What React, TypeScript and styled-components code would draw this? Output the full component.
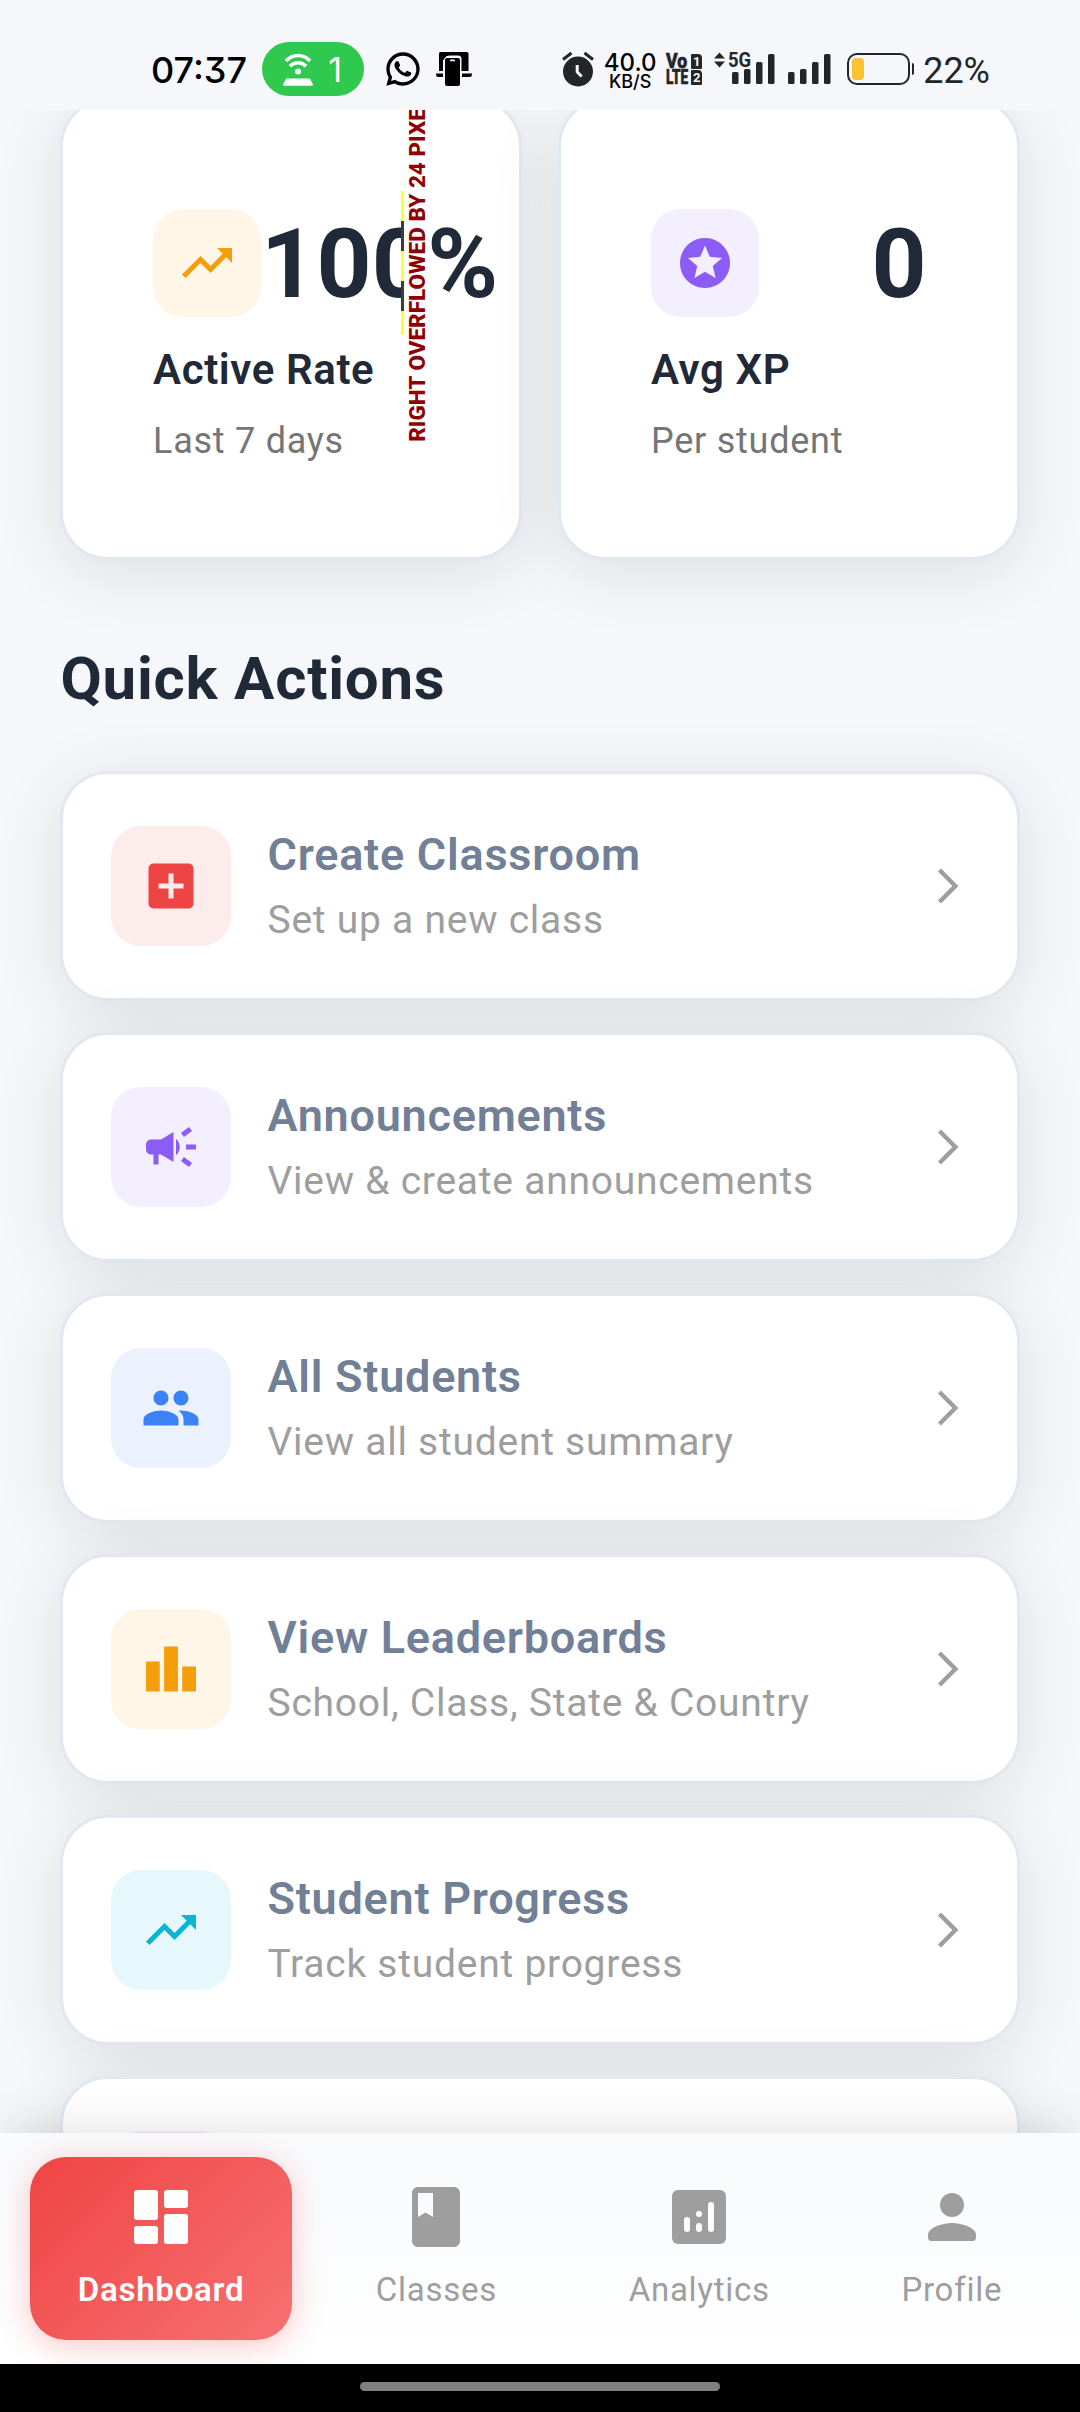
import React from "react";
import styled, { createGlobalStyle } from "styled-components";
import type { IconType } from "react-icons";
import {
  MdAddBox,
  MdArrowForwardIos,
  MdBook,
  MdCampaign,
  MdLeaderboard,
  MdPeople,
  MdStars,
  MdTrendingUp,
} from "react-icons/md";
import { RiWhatsappLine } from "react-icons/ri";

const GlobalStyle = createGlobalStyle`
  *, *::before, *::after { box-sizing: border-box; }
  body { margin: 0; background: #f5f7fb; }
`;

const Screen = styled.div`
  width: 1080px;
  height: 2412px;
  display: flex;
  flex-direction: column;
  overflow: hidden;
  background: #f5f7fb;
  font-family: Roboto, sans-serif;
  letter-spacing: 0.75px;
  color: #1f2937;
`;

/* ---------- Status bar ---------- */

const StatusBar = styled.header`
  flex: none;
  height: 110px;
  padding: 28px 90px 0 151px;
  display: flex;
  justify-content: space-between;
  background: #f5f7fb;
  font-family: Inter, sans-serif;
  letter-spacing: 0;
  color: #000;
`;

const StatusGroup = styled.div`
  display: flex;
  align-items: center;
  height: 82px;
`;

const Clock = styled.time`
  width: 111px;
  padding-top: 2px;
  font-size: 36px;
  font-weight: 450;
  font-feature-settings: "cv09";
  white-space: nowrap;
`;

const HotspotPill = styled.span`
  width: 102px;
  height: 54px;
  border-radius: 27px;
  padding: 0 22px 0 21px;
  display: flex;
  align-items: center;
  justify-content: space-between;
  background: #30c94f;
  color: #fff;
  font-size: 34px;
  font-weight: 400;
`;

const WhatsappSlot = styled.span`
  display: flex;
  margin-left: 19px;
`;

const CastSlot = styled.span`
  display: flex;
  margin-left: 13px;
`;

const NetSpeed = styled.span`
  width: 60px;
  margin-left: 6px;
  padding-top: 5px;
  display: flex;
  flex-direction: column;
  align-items: center;
  font-weight: 500;
`;

const SpeedValue = styled.span`
  font-size: 24px;
  line-height: 20px;
`;

const SpeedUnit = styled.span`
  font-size: 18px;
  line-height: 18px;
`;

const Volte = styled.span`
  margin-left: 6px;
  width: 36px;
  display: grid;
  grid-template-columns: 24px 11px;
  grid-auto-rows: 15px;
  row-gap: 1px;
  column-gap: 1px;
  color: #232626;
`;

const VolteWord = styled.span<{ $stretch: number }>`
  font: 800 20px / 15px Roboto, sans-serif;
  -webkit-text-stroke: 0.7px #232626;
  transform: scaleX(${(p) => p.$stretch});
  transform-origin: left center;
  white-space: nowrap;
`;

const SimTag = styled.span`
  border-radius: 1px 4px 1px 1px;
  display: flex;
  align-items: center;
  justify-content: center;
  background: #232626;
  color: #f5f7fb;
  font: 700 13px / 15px Roboto, sans-serif;
`;

const MobileSignal = styled.span`
  position: relative;
  display: flex;
  margin-left: 12px;
`;

const NetworkType = styled.span`
  position: absolute;
  left: 14px;
  top: -4px;
  font: 700 21px / 21px Roboto, sans-serif;
  transform: scaleX(0.88);
  transform-origin: left center;
  color: #232626;
  -webkit-text-stroke: 3px #f5f7fb;
  paint-order: stroke fill;
`;

const SecondSignal = styled.span`
  display: flex;
  margin-left: 12px;
`;

const Battery = styled.span`
  display: flex;
  align-items: center;
  margin-left: 16px;
`;

const BatteryShell = styled.span`
  width: 63px;
  height: 32px;
  padding: 3px;
  border: 2px solid #232626;
  border-radius: 10px;
  display: flex;
`;

const BatteryLevel = styled.span`
  width: 12px;
  border-radius: 4px;
  background: #fdc22f;
`;

const BatteryTip = styled.span`
  width: 2px;
  height: 12px;
  margin-left: 2px;
  border-radius: 0 2px 2px 0;
  background: #232626;
`;

const BatteryText = styled.span`
  margin-left: 9px;
  padding-top: 4px;
  font: 450 36px / 40px Roboto, sans-serif;
  color: #232626;
`;

/* ---------- Scrolling content ---------- */

const Content = styled.main`
  flex: 1;
  min-height: 0;
  overflow: hidden;
  padding: 0 60px;
`;

const StatGrid = styled.section`
  margin-top: -12px;
  display: grid;
  grid-template-columns: repeat(2, minmax(0, 1fr));
  gap: 36px;
`;

const Card = styled.article`
  background: #fff;
  border: 3px solid #e2e8f0;
  border-radius: 48px;
  box-shadow: 0 12px 70px rgba(0, 0, 0, 0.1);
`;

const StatCard = styled(Card)`
  height: 462px;
  padding: 90px;
`;

const StatTop = styled.div`
  position: relative;
  height: 144px;
  display: flex;
  align-items: center;
  justify-content: space-between;
`;

const IconTile = styled.span<{ $size: number; $bg: string; $fg: string }>`
  flex: none;
  width: ${(p) => p.$size}px;
  height: ${(p) => p.$size}px;
  border-radius: 30px;
  display: flex;
  align-items: center;
  justify-content: center;
  background: ${(p) => p.$bg};
  color: ${(p) => p.$fg};
`;

const StatValue = styled.strong`
  font-size: 96px;
  line-height: 144px;
  font-weight: 700;
  letter-spacing: 0.3px;
  padding-top: 2px;
`;

const StatLabel = styled.h3`
  margin: 3px 0 0;
  font-size: 42px;
  line-height: 63px;
  font-weight: 600;
  letter-spacing: 0.6px;
`;

const StatHint = styled.p`
  margin: 13px 0 0;
  font-size: 36px;
  line-height: 54px;
  color: #757575;
`;

const OverflowStripe = styled.span`
  position: absolute;
  left: 248px;
  top: 0;
  width: 3px;
  height: 144px;
  background: repeating-linear-gradient(
    to bottom,
    #ffff33 0 30px,
    #3c3c3c 30px 60px
  );
`;

const OverflowLabel = styled.span`
  position: absolute;
  left: 251px;
  bottom: -107px;
  width: 25px;
  padding: 0 1.5px 0 0.5px;
  writing-mode: vertical-rl;
  transform: rotate(180deg);
  background: #fff;
  color: #900000;
  font-size: 22.5px;
  line-height: 23px;
  font-weight: 800;
  letter-spacing: 0;
  white-space: nowrap;
`;

const SectionTitle = styled.h2`
  margin: 74px 0 47px;
  padding-left: 0.5px;
  font-size: 60px;
  line-height: 90px;
  font-weight: 700;
`;

const ActionList = styled.section`
  display: flex;
  flex-direction: column;
  gap: 31px;
`;

const ActionCard = styled(Card)`
  height: 230px;
  padding: 0 48px;
  display: flex;
  align-items: center;
  gap: 36px;
`;

const ActionText = styled.div`
  flex: 1;
  padding: 0 0 2px 0.5px;
`;

const ActionTitle = styled.h3`
  margin: 0 0 3px;
  font-size: 45px;
  line-height: 66px;
  font-weight: 600;
  color: #718096;
`;

const ActionSubtitle = styled.p`
  margin: 0;
  font-size: 39px;
  line-height: 58px;
  color: #9e9e9e;
`;

/* ---------- Bottom navigation ---------- */

const NavBar = styled.nav`
  position: relative;
  z-index: 1;
  flex: none;
  height: 231px;
  padding: 24px 12px;
  display: flex;
  justify-content: space-around;
  background: linear-gradient(to bottom, #f8fafc, #fff);
  box-shadow: 0 -6px 42px rgba(0, 0, 0, 0.11);
`;

const NavItem = styled.a<{ $active?: boolean }>`
  height: 183px;
  padding: 24px 48px 26px;
  border-radius: 36px;
  display: flex;
  flex-direction: column;
  align-items: center;
  gap: 13px;
  color: ${(p) => (p.$active ? "#fff" : "#9e9e9e")};
  font-size: 33px;
  line-height: 48px;
  font-weight: ${(p) => (p.$active ? 600 : 400)};
  background: ${(p) => (p.$active ? "linear-gradient(135deg, #ef4444, #f87171)" : "none")};
  box-shadow: ${(p) => (p.$active ? "0 6px 32px rgba(239, 68, 68, 0.3)" : "none")};
`;

const SystemBar = styled.footer`
  position: relative;
  z-index: 1;
  flex: none;
  height: 48px;
  display: flex;
  justify-content: center;
  padding-top: 18px;
  background: #000;
`;

const HomeHandle = styled.span`
  width: 360px;
  height: 9px;
  border-radius: 5px;
  background: #808080;
`;

/* ---------- Icons ---------- */

const HotspotIcon = () => (
  <svg width="30" height="33" viewBox="0 0 30 33" fill="none">
    <path d="M3 8C9.600 0.600 20.400 0.600 27 8M7 13.200c4.500-4.600 11.500-4.600 16 0" stroke="#fff" strokeWidth="3.600" />
    <circle cx="15" cy="18.400" r="3" fill="#fff" />
    <path d="M3.200 25.500h23.600L30 31.500q0 1.300-1.200 1.300H1.200Q0 32.800 0 31.500z" fill="#fff" />
  </svg>
);

const PhoneCastIcon = () => (
  <svg width="36" height="34" viewBox="0 0 36 34">
    <path d="M3 1.500Q3 0 4.500 0h26Q32.500 0 32.500 1.500V19h-7V7q0-3.500-3.500-3.500h-8Q10 3.500 10 5v2L7 8v11H3z" fill="#000" />
    <path d="M0 21.500h7V25H2Q0 25 0 21.500zM26 21.500h10Q36 25 34 25h-8z" fill="#000" />
    <rect x="8" y="5" width="17" height="30" rx="3" fill="#f5f7fb" />
    <rect x="9" y="6" width="15" height="28" rx="2" fill="#000" />
    <rect x="14" y="7.500" width="5" height="1.800" rx=".9" fill="#f5f7fb" />
  </svg>
);

const AlarmIcon = () => (
  <svg width="32" height="36" viewBox="0 0 32 36" fill="none">
    <circle cx="16" cy="20.500" r="15" fill="#232626" />
    <path d="M1 8.500l8.500-6.500M31 8.500L22.500 2" stroke="#232626" strokeWidth="3" />
    <path d="M15.200 14v7l4.500 4.500" stroke="#f5f7fb" strokeWidth="3" />
  </svg>
);

const BarsSvg = styled.svg`
  overflow: visible;
`;

const barTops = [18, 15, 8, 0];

const SignalBars = ({ arrows }: { arrows?: boolean }) => {
  const offset = arrows ? 17 : 0;
  return (
    <BarsSvg width={offset + 44} height="30" viewBox={`0 0 ${offset + 44} 30`} fill="#232626">
      {arrows && <path d="M0 4.500L5.500-1.500 11 4.500zM0 7.500h11l-5.500 6z" />}
      {barTops.map((top, i) => (
        <rect key={i} x={offset + 1 + i * 12} y={top} width="6.500" height={30 - top} rx="1.500" />
      ))}
    </BarsSvg>
  );
};

const DashboardIcon = () => (
  <svg width="72" height="72" viewBox="0 0 24 24" fill="currentColor">
    <rect x="3" y="3" width="8" height="10" rx="1" />
    <rect x="3" y="15" width="8" height="6" rx="1" />
    <rect x="13" y="3" width="8" height="6" rx="1" />
    <rect x="13" y="11" width="8" height="10" rx="1" />
  </svg>
);

const AnalyticsIcon = () => (
  <svg width="72" height="72" viewBox="0 0 24 24">
    <rect x="3" y="3" width="18" height="18" rx="2" fill="currentColor" />
    <g fill="#fcfdfd">
      <rect x="7" y="12" width="2" height="5" rx="1" />
      <circle cx="12" cy="11" r="1" />
      <rect x="11" y="14" width="2" height="3" rx="1" />
      <rect x="15" y="7" width="2" height="10" rx="1" />
    </g>
  </svg>
);

const ProfileIcon = () => (
  <svg width="72" height="72" viewBox="0 0 24 24" fill="currentColor">
    <circle cx="12" cy="8" r="4" />
    <path d="M12 14c-2.670 0-8 1.340-8 4v1c0 .55.45 1 1 1h14c.55 0 1-.45 1-1v-1c0-2.660-5.330-4-8-4z" />
  </svg>
);

/* ---------- Data ---------- */

interface Action {
  title: string;
  subtitle: string;
  icon: IconType;
  fg: string;
  bg: string;
}

const actions: Action[] = [
  { title: "Create Classroom", subtitle: "Set up a new class", icon: MdAddBox, fg: "#ef4444", bg: "#fdecec" },
  { title: "Announcements", subtitle: "View & create announcements", icon: MdCampaign, fg: "#8b5cf6", bg: "#f3effe" },
  { title: "All Students", subtitle: "View all student summary", icon: MdPeople, fg: "#3b82f6", bg: "#ebf2fe" },
  { title: "View Leaderboards", subtitle: "School, Class, State & Country", icon: MdLeaderboard, fg: "#f59e0b", bg: "#fff6e7" },
  { title: "Student Progress", subtitle: "Track student progress", icon: MdTrendingUp, fg: "#06b6d4", bg: "#e6f8fb" },
];

/* ---------- App ---------- */

export default function App() {
  return (
    <>
      <GlobalStyle />
      <Screen>
        <StatusBar>
          <StatusGroup>
            <Clock>07:37</Clock>
            <HotspotPill>
              <HotspotIcon />
              <span>1</span>
            </HotspotPill>
            <WhatsappSlot>
              <RiWhatsappLine size={40} />
            </WhatsappSlot>
            <CastSlot>
              <PhoneCastIcon />
            </CastSlot>
          </StatusGroup>
          <StatusGroup>
            <AlarmIcon />
            <NetSpeed>
              <SpeedValue>40.0</SpeedValue>
              <SpeedUnit>KB/S</SpeedUnit>
            </NetSpeed>
            <Volte>
              <VolteWord $stretch={0.88}>Vo</VolteWord>
              <SimTag>1</SimTag>
              <VolteWord $stretch={0.68}>LTE</VolteWord>
              <SimTag>2</SimTag>
            </Volte>
            <MobileSignal>
              <SignalBars arrows />
              <NetworkType>5G</NetworkType>
            </MobileSignal>
            <SecondSignal>
              <SignalBars />
            </SecondSignal>
            <Battery>
              <BatteryShell>
                <BatteryLevel />
              </BatteryShell>
              <BatteryTip />
            </Battery>
            <BatteryText>22%</BatteryText>
          </StatusGroup>
        </StatusBar>

        <Content>
          <StatGrid>
            <StatCard>
              <StatTop>
                <IconTile $size={108} $bg="#fff6e7" $fg="#f59e0b">
                  <MdTrendingUp size={60} />
                </IconTile>
                <StatValue>100%</StatValue>
                <OverflowStripe />
                <OverflowLabel>RIGHT OVERFLOWED BY 24 PIXELS</OverflowLabel>
              </StatTop>
              <StatLabel>Active Rate</StatLabel>
              <StatHint>Last 7 days</StatHint>
            </StatCard>
            <StatCard>
              <StatTop>
                <IconTile $size={108} $bg="#f3effe" $fg="#8b5cf6">
                  <MdStars size={60} />
                </IconTile>
                <StatValue>0</StatValue>
              </StatTop>
              <StatLabel>Avg XP</StatLabel>
              <StatHint>Per student</StatHint>
            </StatCard>
          </StatGrid>

          <SectionTitle>Quick Actions</SectionTitle>

          <ActionList>
            {actions.map(({ title, subtitle, icon: Icon, fg, bg }) => (
              <ActionCard key={title}>
                <IconTile $size={120} $bg={bg} $fg={fg}>
                  <Icon size={60} />
                </IconTile>
                <ActionText>
                  <ActionTitle>{title}</ActionTitle>
                  <ActionSubtitle>{subtitle}</ActionSubtitle>
                </ActionText>
                <MdArrowForwardIos size={42} color="#9e9e9e" />
              </ActionCard>
            ))}
            <ActionCard>
              <IconTile $size={120} $bg="#fdecf5" $fg="#ec4899" />
            </ActionCard>
          </ActionList>
        </Content>

        <NavBar>
          <NavItem $active>
            <DashboardIcon />
            Dashboard
          </NavItem>
          <NavItem>
            <MdBook size={72} />
            Classes
          </NavItem>
          <NavItem>
            <AnalyticsIcon />
            Analytics
          </NavItem>
          <NavItem>
            <ProfileIcon />
            Profile
          </NavItem>
        </NavBar>
        <SystemBar>
          <HomeHandle />
        </SystemBar>
      </Screen>
    </>
  );
}
